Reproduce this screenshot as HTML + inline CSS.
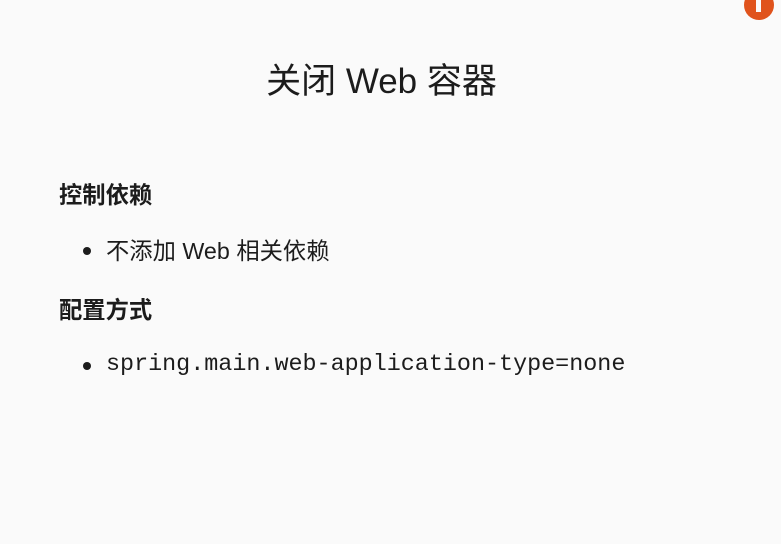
<!DOCTYPE html>
<html><head><meta charset="utf-8"><style>
body{margin:0;width:781px;height:544px;background:#fafafa;overflow:hidden;position:relative;font-family:"Liberation Sans","Noto Sans CJK SC",sans-serif;color:#1c1c1c}
.t{position:absolute;left:-9px;width:781px;text-align:center;top:61px;font-size:35px;line-height:42px}
.h{position:absolute;left:59px;font-size:23.3px;font-weight:bold;line-height:28px}
.b{position:absolute;left:106px;font-size:23.3px;line-height:28px}
.dot{position:absolute;left:83px;width:8px;height:8px;border-radius:50%;background:#1c1c1c}
.m{font-family:"Liberation Mono",monospace;font-size:23.4px}
</style></head><body>
<div style="position:absolute;left:744px;top:-10px;width:30px;height:30px;border-radius:50%;background:#e0531c"></div>
<div style="position:absolute;left:756px;top:0;width:5px;height:12px;background:#fafafa"></div>
<div class="t">关闭 Web 容器</div>
<div class="h" style="top:181px">控制依赖</div>
<div class="dot" style="top:247px"></div>
<div class="b" style="top:237px">不添加 Web 相关依赖</div>
<div class="h" style="top:296px">配置方式</div>
<div class="dot" style="top:362px"></div>
<div class="b m" style="top:351px">spring.main.web-application-type=none</div>
</body></html>
